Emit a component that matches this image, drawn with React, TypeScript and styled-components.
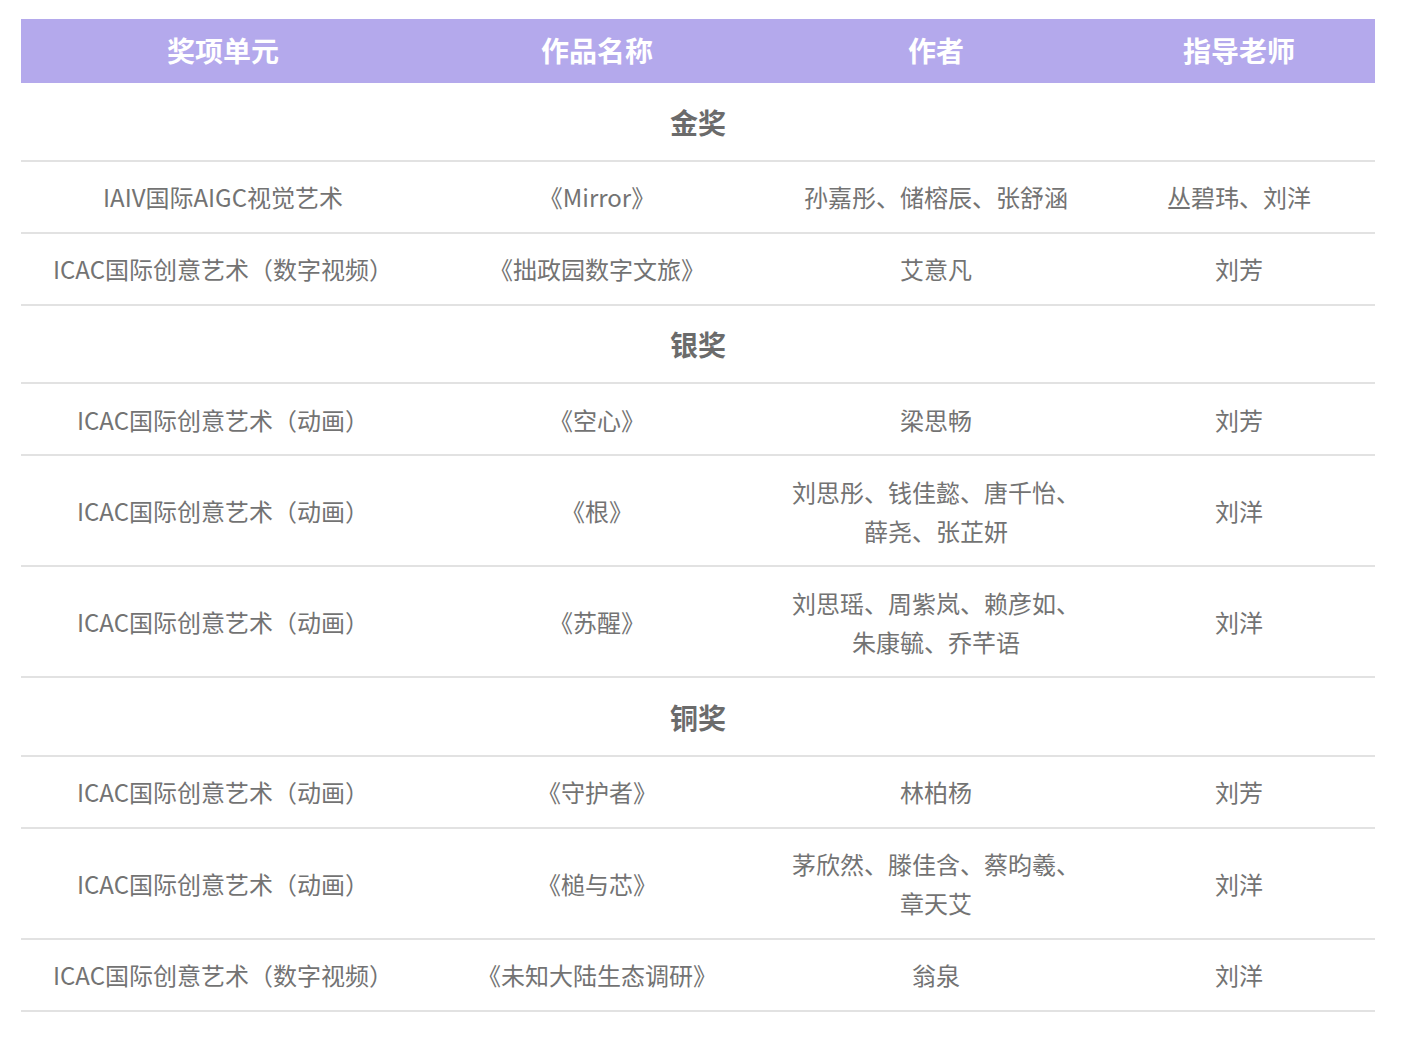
import React from 'react';
import styled, { createGlobalStyle } from 'styled-components';

const GlobalStyle = createGlobalStyle`
	html, body {
		margin: 0;
		padding: 0;
		background: #fff;
	}
	body {
		font-family: 'Noto Sans CJK SC', 'Noto Sans', sans-serif;
	}
`;

const columns = '404px 344px 334px 1fr';

type Entry = {
	unit: string;
	work: string;
	authors: string;
	teacher: string;
};

type Group = {
	award: string;
	entries: Entry[];
};

const groups: Group[] = [
	{
		award: '金奖',
		entries: [
			{ unit: 'IAIV国际AIGC视觉艺术', work: '《Mirror》', authors: '孙嘉彤、储榕辰、张舒涵', teacher: '丛碧玮、刘洋' },
			{ unit: 'ICAC国际创意艺术（数字视频）', work: '《拙政园数字文旅》', authors: '艾意凡', teacher: '刘芳' },
		],
	},
	{
		award: '银奖',
		entries: [
			{ unit: 'ICAC国际创意艺术（动画）', work: '《空心》', authors: '梁思畅', teacher: '刘芳' },
			{ unit: 'ICAC国际创意艺术（动画）', work: '《根》', authors: '刘思彤、钱佳懿、唐千怡、薛尧、张芷妍', teacher: '刘洋' },
			{ unit: 'ICAC国际创意艺术（动画）', work: '《苏醒》', authors: '刘思瑶、周紫岚、赖彦如、朱康毓、乔芊语', teacher: '刘洋' },
		],
	},
	{
		award: '铜奖',
		entries: [
			{ unit: 'ICAC国际创意艺术（动画）', work: '《守护者》', authors: '林柏杨', teacher: '刘芳' },
			{ unit: 'ICAC国际创意艺术（动画）', work: '《槌与芯》', authors: '茅欣然、滕佳含、蔡昀羲、章天艾', teacher: '刘洋' },
			{ unit: 'ICAC国际创意艺术（数字视频）', work: '《未知大陆生态调研》', authors: '翁泉', teacher: '刘洋' },
		],
	},
];

export default function App() {
	return (
		<>
			<GlobalStyle />
			<Page>
				<Table>
					<HeadRow>
						<HeadCell>奖项单元</HeadCell>
						<HeadCell>作品名称</HeadCell>
						<HeadCell>作者</HeadCell>
						<HeadCell>指导老师</HeadCell>
					</HeadRow>

					{groups.map((group) => (
						<React.Fragment key={group.award}>
							<AwardRow>{group.award}</AwardRow>
							{group.entries.map((entry, i) => (
								<Row key={i}>
									<Cell>{entry.unit}</Cell>
									<Cell>{entry.work}</Cell>
									<Cell>{entry.authors}</Cell>
									<Cell>{entry.teacher}</Cell>
								</Row>
							))}
						</React.Fragment>
					))}
				</Table>
			</Page>
		</>
	);
}

const Page = styled.div`
	padding: 19px 31px 30px 21px;
`;

const Table = styled.div`
	display: flex;
	flex-direction: column;
	width: 1354px;
`;

const HeadRow = styled.div`
	display: grid;
	grid-template-columns: ${columns};
	background: #b4a9ec;
`;

const HeadCell = styled.div`
	padding: 12px 12px 13px;
	text-align: center;
	color: #fff;
	font-size: 28px;
	font-weight: 700;
	line-height: 39px;
`;

const AwardRow = styled.div`
	padding: 16.5px 12px 16px;
	text-align: center;
	color: #6b6b6b;
	font-size: 28px;
	font-weight: 700;
	line-height: 44px;
	border-bottom: 2px solid #e2e2e2;
`;

const Row = styled.div`
	display: grid;
	grid-template-columns: ${columns};
	align-items: center;
	border-bottom: 2px solid #e2e2e2;
`;

const Cell = styled.div`
	padding: 15.5px 12px;
	text-align: center;
	color: #737373;
	font-size: 24px;
	line-height: 39px;
`;
